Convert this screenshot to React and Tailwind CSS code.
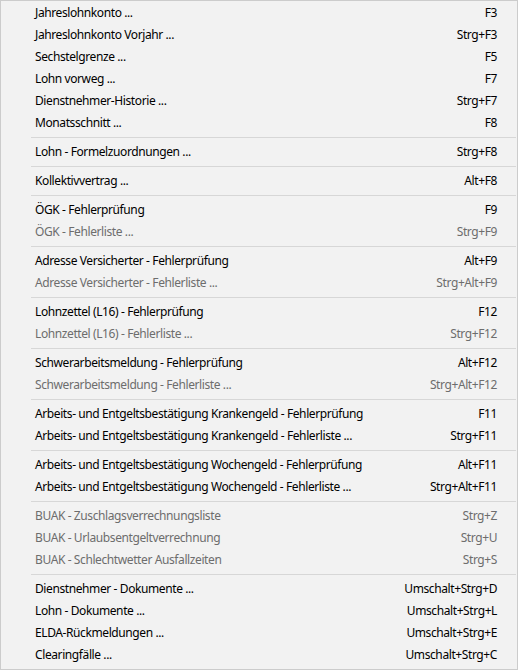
const groups = [
  [
    ['Jahreslohnkonto ...', 'F3'],
    ['Jahreslohnkonto Vorjahr ...', 'Strg+F3'],
    ['Sechstelgrenze ...', 'F5'],
    ['Lohn vorweg ...', 'F7'],
    ['Dienstnehmer-Historie ...', 'Strg+F7'],
    ['Monatsschnitt ...', 'F8'],
  ],
  [['Lohn - Formelzuordnungen ...', 'Strg+F8']],
  [['Kollektivvertrag ...', 'Alt+F8']],
  [
    ['ÖGK - Fehlerprüfung', 'F9'],
    ['ÖGK - Fehlerliste ...', 'Strg+F9', true],
  ],
  [
    ['Adresse Versicherter - Fehlerprüfung', 'Alt+F9'],
    ['Adresse Versicherter - Fehlerliste ...', 'Strg+Alt+F9', true],
  ],
  [
    ['Lohnzettel (L16) - Fehlerprüfung', 'F12'],
    ['Lohnzettel (L16) - Fehlerliste ...', 'Strg+F12', true],
  ],
  [
    ['Schwerarbeitsmeldung - Fehlerprüfung', 'Alt+F12'],
    ['Schwerarbeitsmeldung - Fehlerliste ...', 'Strg+Alt+F12', true],
  ],
  [
    ['Arbeits- und Entgeltsbestätigung Krankengeld - Fehlerprüfung', 'F11'],
    ['Arbeits- und Entgeltsbestätigung Krankengeld - Fehlerliste ...', 'Strg+F11'],
  ],
  [
    ['Arbeits- und Entgeltsbestätigung Wochengeld - Fehlerprüfung', 'Alt+F11'],
    ['Arbeits- und Entgeltsbestätigung Wochengeld - Fehlerliste ...', 'Strg+Alt+F11'],
  ],
  [
    ['BUAK - Zuschlagsverrechnungsliste', 'Strg+Z', true],
    ['BUAK - Urlaubsentgeltverrechnung', 'Strg+U', true],
    ['BUAK - Schlechtwetter Ausfallzeiten', 'Strg+S', true],
  ],
  [
    ['Dienstnehmer - Dokumente ...', 'Umschalt+Strg+D'],
    ['Lohn - Dokumente ...', 'Umschalt+Strg+L'],
    ['ELDA-Rückmeldungen ...', 'Umschalt+Strg+E'],
    ['Clearingfälle ...', 'Umschalt+Strg+C'],
  ],
]

function MenuRow({ label, shortcut, disabled }) {
  return (
    <div
      className={`flex h-[22px] items-center justify-between pl-[34px] pr-[20px] ${
        disabled ? 'text-[#6d6d6d]' : 'text-black'
      }`}
    >
      <span>{label}</span>
      <span>{shortcut}</span>
    </div>
  )
}

export default function App() {
  return (
    <div className="h-[670px] w-[518px] border border-[#cccccc] bg-[#f2f2f2] pt-[1px] pb-[3px] font-['Noto_Sans',sans-serif] text-[12px] leading-none tracking-[-0.4px]">
      {groups.map((group, i) => (
        <div key={i}>
          {i > 0 && (
            <div className="flex h-[7px] items-center pl-[30px] pr-[1px]">
              <div className="h-px w-full bg-[#d7d7d7]" />
            </div>
          )}
          {group.map(([label, shortcut, disabled]) => (
            <MenuRow key={label} label={label} shortcut={shortcut} disabled={disabled} />
          ))}
        </div>
      ))}
    </div>
  )
}
